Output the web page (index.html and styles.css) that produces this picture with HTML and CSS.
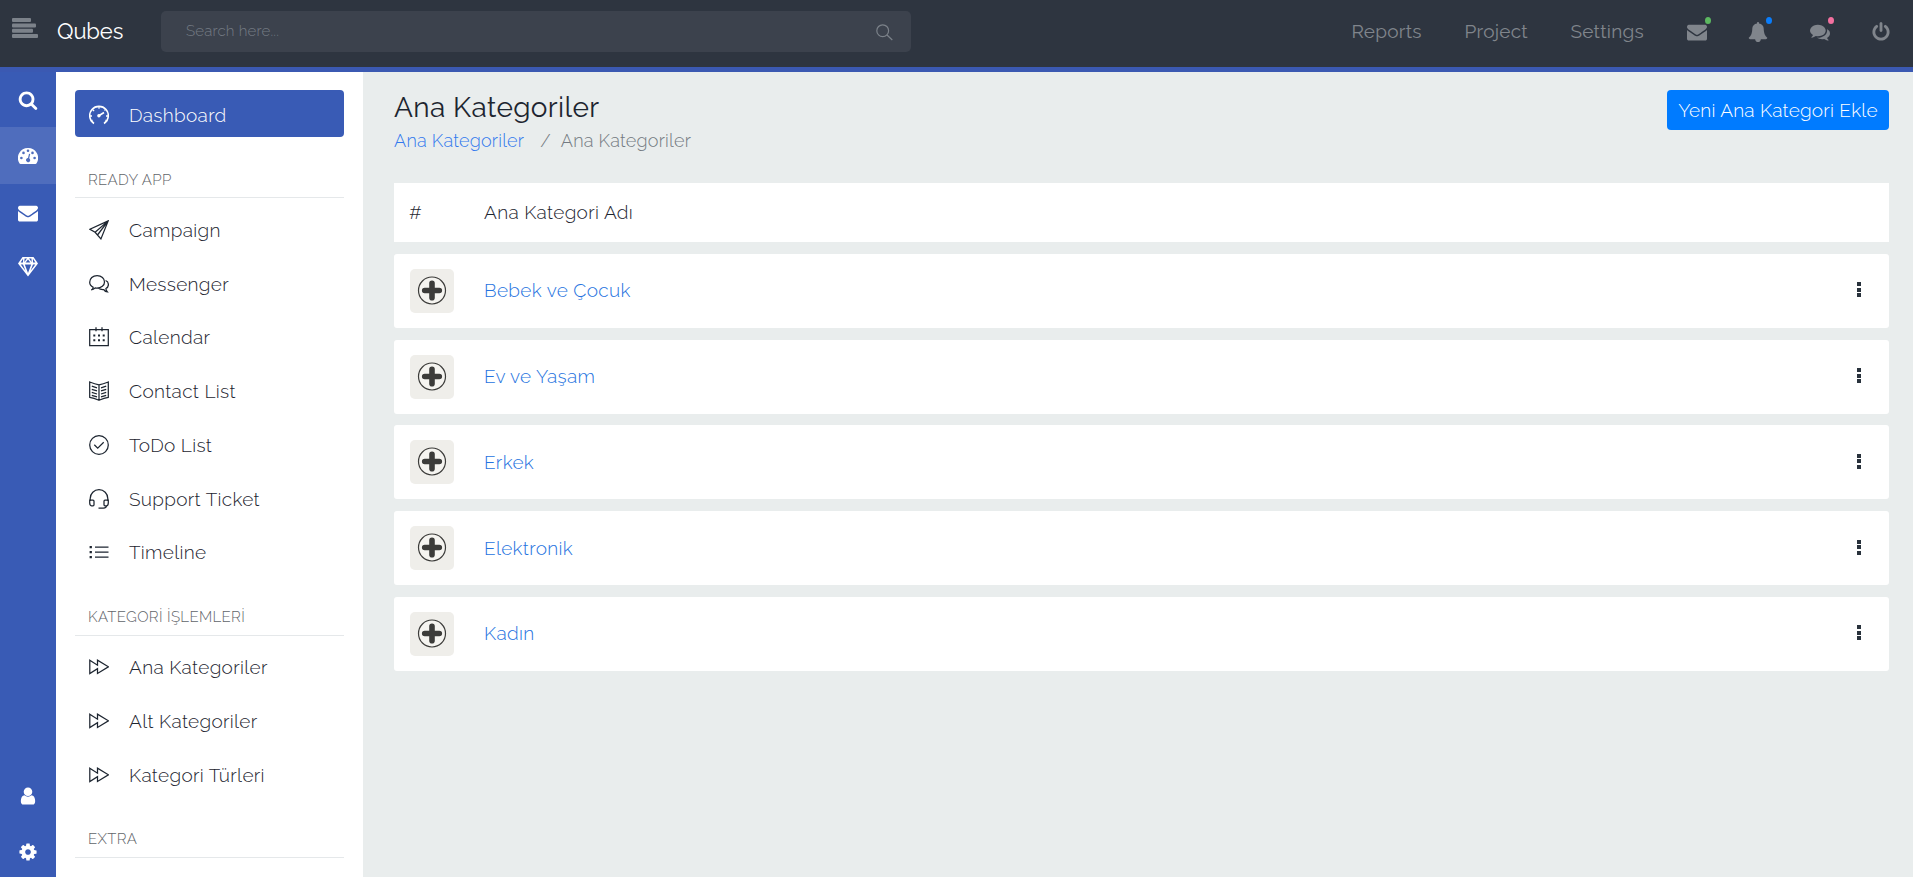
FILE: index.html
```html
<!DOCTYPE html>
<html lang="tr">
<head>
<meta charset="utf-8">
<title>Qubes - Ana Kategoriler</title>
<link rel="stylesheet" href="styles.css">
</head>
<body>
<svg class="sprite" aria-hidden="true">
  <symbol id="search" viewBox="0 0 1792 1792"><path d="M1216 832q0-185-131.5-316.5t-316.5-131.5-316.5 131.5-131.5 316.5 131.5 316.5 316.5 131.5 316.5-131.5 131.5-316.5zm512 832q0 52-38 90t-90 38q-54 0-90-38l-343-342q-179 124-399 124-143 0-273.5-55.5t-225-150-150-225-55.5-273.5 55.5-273.5 150-225 225-150 273.5-55.5 273.5 55.5 225 150 150 225 55.5 273.5q0 220-124 399l343 343q37 37 37 90z"/></symbol>
  <symbol id="mail" viewBox="0 0 1792 1792"><path d="M1792 710v794q0 66-47 113t-113 47h-1472q-66 0-113-47t-47-113v-794q44 49 101 87 362 246 497 345 57 42 92.5 65.5t94.5 48 110 24.5h2q51 0 110-24.5t94.5-48 92.5-65.5q170-123 498-345 57-39 100-87zm0-294q0 79-49 151t-122 123q-376 261-468 325-10 7-42.5 31t-54 38.5-52 32.5-57.5 27-50 9h-2q-23 0-50-9t-57.5-27-52-32.5-54-38.5-42.5-31q-91-64-262-182.5t-205-142.5q-62-42-117-115.5t-55-136.5q0-78 41.5-130t118.5-52h1472q65 0 112.5 47t47.5 113z"/></symbol>
  <symbol id="bell" viewBox="0 0 1792 1792"><path d="M1728 1408q0 52-38 90t-90 38h-448q0 106-75 181t-181 75-181-75-75-181h-448q-52 0-90-38t-38-90q50-42 91-88t85-119.5 74.500-158.500 50-206 19.500-260q0-152 117-282.500t307-158.500q-8-19-8-39 0-40 28-68t68-28 68 28 28 68q0 20-8 39 190 28 307 158.500t117 282.500q0 139 19.500 260t50 206 74.500 158.500 85 119.500 91 88z"/></symbol>
  <symbol id="comments" viewBox="0 0 1792 1792"><path d="M1408 768q0 139-94 257t-256.5 186.500-353.500 68.500q-86 0-176-16-124 88-278 128-36 9-86 16h-3q-11 0-20.500-8t-11.500-21q-1-3-1-6.500t.5-6.500 2-6l2.500-5 3.500-5.500 4-5 4.500-5 4-4.500q5-6 23-25t26-29.500 22.500-29 25-38.500 20.500-44q-124-72-195-177t-71-224q0-139 94-257t256.500-186.500 353.500-68.500 353.500 68.500 256.500 186.500 94 257zm384 256q0 120-71 224.500t-195 176.500q10 24 20.500 44t25 38.500 22.500 29 26 29.500 23 25q1 1 4 4.500t4.500 5 4 5 3.500 5.500l2.500 5 2 6 .5 6.500-1 6.500q-3 14-13 22t-22 7q-50-7-86-16-154-40-278-128-90 16-176 16-271 0-472-132 58 4 88 4 161 0 309-45t264-129q125-92 192-212t67-254q0-77-23-152 129 71 204 178t75 230z"/></symbol>
  <symbol id="power" viewBox="0 0 1792 1792"><path d="M1664 896q0 156-61 298t-164 245-245 164-298 61-298-61-245-164-164-245-61-298q0-182 80.500-343t226.500-270q43-32 95.500-25t83.500 50q32 42 24.500 94.500t-49.500 84.500q-98 74-151.500 181t-53.500 228q0 104 40.500 198.500t109.500 163.500 163.500 109.500 198.500 40.500 198.500-40.500 163.500-109.500 109.500-163.500 40.500-198.500q0-121-53.500-228t-151.500-181q-42-32-49.500-84.500t24.500-94.500q31-43 84-50t95 25q146 109 226.500 270t80.500 343zm-640-768v640q0 52-38 90t-90 38-90-38-38-90v-640q0-52 38-90t90-38 90 38 38 90z"/></symbol>
  <symbol id="user" viewBox="0 0 1792 1792"><path d="M1536 1399q0 109-62.500 187t-150.500 78h-854q-88 0-150.500-78t-62.500-187q0-85 8.500-160.500t31.500-152 58.500-131 94-89 134.500-34.500q131 128 313 128t313-128q76 0 134.500 34.500t94 89 58.500 131 31.500 152 8.500 160.500zm-256-887q0 159-112.500 271.500t-271.500 112.500-271.500-112.500-112.500-271.500 112.500-271.500 271.500-112.500 271.500 112.500 112.500 271.500z"/></symbol>
  <symbol id="cog" viewBox="0 0 1792 1792"><path d="M1152 896q0-106-75-181t-181-75-181 75-75 181 75 181 181 75 181-75 75-181zm512-109v222q0 12-8 23t-20 13l-185 28q-19 54-39 91 35 50 107 138 10 12 10 25t-9 23q-27 37-99 108t-94 71q-12 0-26-9l-138-108q-44 23-91 38-16 136-29 186-7 28-36 28h-222q-14 0-24.500-8.500t-11.500-21.500l-28-184q-49-16-90-37l-141 107q-10 9-25 9-14 0-25-11-126-114-165-168-7-10-7-23 0-12 8-23 15-21 51-66.500t54-70.500q-27-50-41-99l-183-27q-13-2-21-12.500t-8-23.500v-222q0-12 8-23t19-13l186-28q14-46 39-92-40-57-107-138-10-12-10-24 0-10 9-23 26-36 98.500-107.500t94.500-71.500q13 0 26 10l138 107q44-23 91-38 16-136 29-186 7-28 36-28h222q14 0 24.500 8.500t11.500 21.500l28 184q49 16 90 37l142-107q9-9 24-9 13 0 25 10 129 119 165 170 7 8 7 22 0 12-8 23-15 21-51 66.500t-54 70.500q26 50 41 98l183 28q13 2 21 12.500t8 23.500z"/></symbol>
  <symbol id="gauge" viewBox="0 0 20 20"><path fill-rule="evenodd" d="M10 2a10 10 0 0 1 8.600 15.200q-.4.800-1.200.8H2.600q-.8 0-1.200-.8A10 10 0 0 1 10 2zM2.100 12a1.300 1.300 0 1 0 2.600 0 1.300 1.300 0 1 0-2.600 0zM4.200 6.900a1.300 1.300 0 1 0 2.600 0 1.300 1.300 0 1 0-2.600 0zM8.700 4.700a1.300 1.300 0 1 0 2.600 0 1.300 1.300 0 1 0-2.600 0zM13.200 6.900a1.300 1.300 0 1 0 2.600 0 1.300 1.300 0 1 0-2.600 0zM15.300 12a1.300 1.300 0 1 0 2.600 0 1.300 1.300 0 1 0-2.600 0zM11 7.800L10 12a2.100 2.100 0 1 0 1.200.3L12.200 8z"/></symbol>
  <symbol id="diamond" viewBox="0 0 20 20"><path fill-rule="evenodd" d="M4.500 0h11L20 6.500 10 19.500 0 6.500zM5.100 1.700L2.600 5.500H5zM6.600 1.500L6.300 5 9 1.500zM11 1.500L13.700 5l-.3-3.500zM14.900 1.700l.1 3.800h2.400zM10 2.600L7.600 5.500h4.800zM2.700 7.400l4.800 6.300-2.500-6.300zM6.800 7.400L10 16l3.200-8.600zM15 7.400l-2.500 6.300 4.800-6.300z"/></symbol>
  <symbol id="speed" viewBox="0 0 20 20"><g class="line"><path d="M5 18.500A9.300 9.300 0 1 1 15 18.500" stroke-width="1.600"/><path d="M.7 11h2.300M17 11h2.300M3.500 4.500l1.600 1.600M10 1.500v2.300M1.500 16l2-.8M18.500 16l-2-.8M16.500 4.500l-1 1" stroke-width="1.300"/><path d="M9.800 10.800l5.200-3.300" stroke-width="1.600"/></g><circle cx="9.900" cy="10.800" r="1.700"/></symbol>
  <symbol id="plane" viewBox="0 0 20 20"><g class="line"><path d="M19.200.9L.9 9.200l5.200 3.100 5.800 6.600zM19.200.9L6.100 12.300M19.200.9L8.500 15"/></g></symbol>
  <symbol id="bubbles" viewBox="0 0 20 20"><g class="line"><path d="M2.200 16q2-.8 2-2.800C1.800 12.100.7 10.300.7 8.200.7 4.800 3.700 1.500 8.100 1.500s7.400 3 7.400 6.400-3.200 6.200-7.600 6.200q-1 0-1.700-.2Q4.500 15.800 2.200 16zM16.600 6.500c2 .8 2.800 2.300 2.800 4.100 0 1.700-.8 3.100-2.500 3.900q0 1.900 1.500 3.400-2.300 0-3.600-2.300-3.600.3-5.500-1.600"/></g></symbol>
  <symbol id="calendar" viewBox="0 0 20 20"><g class="line"><path d="M.7 2.700h18.600v16H.7zM7 .3v4M13 .3v4"/></g><path d="M4.300 7.500h2v2h-2zM9 7.500h2v2H9zM13.700 7.500h2v2h-2zM4.300 12.300h2v2h-2zM9 12.300h2v2H9zM13.700 12.300h2v2h-2z"/></symbol>
  <symbol id="book" viewBox="0 0 20 20"><g class="line"><path d="M10 3.800Q6 2.900.7 1v15.300q4 .7 9.300 3 5.300-2.300 9.300-3V1Q14 2.900 10 3.800zM10 3.800v15.500M2.800 5.200l5.200 1.600M2.800 8.300L8 9.900M2.800 11.400L8 13M2.800 14.300L8 15.900M17.200 5.200L12 6.800M17.200 8.300L12 9.900M17.200 11.400L12 13M17.200 14.300L12 15.900"/></g></symbol>
  <symbol id="check" viewBox="0 0 20 20"><g class="line"><circle cx="10" cy="10" r="9.300"/><path d="M5.300 9.800l3.400 3.400 6-6"/></g></symbol>
  <symbol id="headset" viewBox="0 0 20 20"><g class="line"><path d="M1.200 12V9.500a8.800 8.800 0 0 1 17.600 0V12M.7 11.200H4q1 0 1 1v3.600q0 1-1 1H2.500q-1.800 0-1.800-3zM19.300 11.200H16q-1 0-1 1v3.600q0 1 1 1h1.500q1.800 0 1.800-3zM17.500 16.800q0 2.200-3 2.200h-5"/></g></symbol>
  <symbol id="list" viewBox="0 0 20 20"><g class="line"><path d="M6 5.200h13.500M6 10.100h13.500M6 15h13.500"/></g><path d="M.6 4h2.300v2.300H.6zM.6 9h2.300v2.300H.6zM.6 14h2.300v2.300H.6z"/></symbol>
  <symbol id="forward" viewBox="0 0 20 20"><g class="line"><path d="M.8 3.200l7.700 5V3.200L19.400 9.800 8.500 16.500v-4.900L.8 16.500z"/></g></symbol>
  <symbol id="plus" viewBox="0 0 44 44"><circle cx="22" cy="21.500" r="13.500" fill="#f5f4f0" stroke="#3c3c3a" stroke-width="1.200"/><path d="M22 14.200v14.600M14.700 21.500h14.600" stroke="#3c3c3a" stroke-width="5.600" stroke-linecap="round"/></symbol>
</svg>

<header class="topbar">
  <svg class="menu-toggle" viewBox="0 0 26 20"><rect width="19" height="4" rx="1"/><rect y="5.500" width="24" height="4" rx="1"/><rect y="10.700" width="21" height="4" rx="1"/><rect y="16" width="26" height="4" rx="1"/></svg>
  <div class="brand">Qubes</div>
  <div class="searchbox"><span class="search-hint">Search here...</span>
    <svg class="search-glass" viewBox="0 0 17 17"><circle cx="6.700" cy="6.700" r="5.900"/><path d="M11 11l5.300 5"/></svg></div>
  <nav class="topnav">
    <a class="top-reports">Reports</a><a class="top-project">Project</a><a class="top-settings">Settings</a>
    <span class="tool"><svg><use href="#mail"/></svg><i class="dot green"></i></span>
    <span class="tool"><svg><use href="#bell"/></svg><i class="dot blue"></i></span>
    <span class="tool"><svg><use href="#comments"/></svg><i class="dot pink"></i></span>
    <span class="tool"><svg><use href="#power"/></svg></span>
  </nav>
</header>

<div class="shell">
  <aside class="rail">
    <a class="rail-link"><svg><use href="#search"/></svg></a>
    <a class="rail-link active"><svg><use href="#gauge"/></svg></a>
    <a class="rail-link"><svg><use href="#mail"/></svg></a>
    <a class="rail-link short"><svg><use href="#diamond"/></svg></a>
    <a class="rail-link bottom"><svg><use href="#user"/></svg></a>
    <a class="rail-link last"><svg><use href="#cog"/></svg></a>
  </aside>

  <nav class="sidebar">
    <a class="item current"><svg><use href="#speed"/></svg>Dashboard</a>
    <h6 class="group">READY APP</h6>
    <a class="item"><svg><use href="#plane"/></svg>Campaign</a>
    <a class="item"><svg><use href="#bubbles"/></svg>Messenger</a>
    <a class="item"><svg><use href="#calendar"/></svg>Calendar</a>
    <a class="item"><svg><use href="#book"/></svg>Contact List</a>
    <a class="item"><svg><use href="#check"/></svg>ToDo List</a>
    <a class="item"><svg><use href="#headset"/></svg>Support Ticket</a>
    <a class="item"><svg><use href="#list"/></svg>Timeline</a>
    <h6 class="group tight">KATEGORİ İŞLEMLERİ</h6>
    <a class="item"><svg><use href="#forward"/></svg>Ana Kategoriler</a>
    <a class="item"><svg><use href="#forward"/></svg>Alt Kategoriler</a>
    <a class="item"><svg><use href="#forward"/></svg>Kategori Türleri</a>
    <h6 class="group tight">EXTRA</h6>
  </nav>

  <main class="content">
    <div class="page-head">
      <div>
        <h1 class="title">Ana Kategoriler</h1>
        <div class="crumbs"><a class="crumb-link">Ana Kategoriler</a><span class="slash">/</span><span>Ana Kategoriler</span></div>
      </div>
      <button class="add">Yeni Ana Kategori Ekle</button>
    </div>
    <div class="table">
      <div class="row head"><span class="hash">#</span><span>Ana Kategori Adı</span></div>
      <div class="row"><svg class="thumb"><use href="#plus"/></svg><a class="name">Bebek ve Çocuk</a><span class="more"><i></i><i></i><i></i></span></div>
      <div class="row"><svg class="thumb"><use href="#plus"/></svg><a class="name">Ev ve Yaşam</a><span class="more"><i></i><i></i><i></i></span></div>
      <div class="row"><svg class="thumb"><use href="#plus"/></svg><a class="name">Erkek</a><span class="more"><i></i><i></i><i></i></span></div>
      <div class="row"><svg class="thumb"><use href="#plus"/></svg><a class="name">Elektronik</a><span class="more"><i></i><i></i><i></i></span></div>
      <div class="row"><svg class="thumb"><use href="#plus"/></svg><a class="name">Kadın</a><span class="more"><i></i><i></i><i></i></span></div>
    </div>
  </main>
</div>
</body>
</html>
```
FILE: styles.css
```css
* { box-sizing: border-box; }
body {
  margin: 0;
  height: 877px;
  overflow: hidden;
  display: flex;
  flex-direction: column;
  background: #e9eded;
  color: #1d2530;
  font-family: Raleway, Lato, "Open Sans", sans-serif;
  font-size: 19px;
  font-weight: 360;
  letter-spacing: 0.33px;
}
.sprite { position: absolute; width: 0; height: 0; }
.line { fill: none; stroke: currentColor; stroke-width: 1.25; }
svg { fill: currentColor; flex: none; }

/* top bar */
.topbar {
  flex: none;
  height: 72px;
  padding: 0 22px 0 12px;
  display: flex;
  align-items: flex-start;
  background: #2e3540;
  border-bottom: 5px solid #3b59b2;
}
.menu-toggle { width: 26px; height: 20px; margin-top: 18px; color: #7c828a; }
.brand { width: 104px; margin: 16px 0 0 19px; font-size: 22px; font-weight: 400; letter-spacing: -0.1px; line-height: 30px; color: #fff; }
.searchbox {
  width: 750px;
  height: 41px;
  margin-top: 11px;
  padding: 0 18px 0 25px;
  display: flex;
  align-items: center;
  justify-content: space-between;
  border-radius: 5px;
  background: #3c424d;
}
.search-hint { font-size: 15px; font-weight: 300; line-height: 20px; letter-spacing: 0.2px; padding-bottom: 2px; color: #747b84; }
.search-glass { width: 17px; height: 17px; margin-top: 2px; fill: none; stroke: #7c828a; stroke-width: 1.2; }
.topnav { margin-left: auto; display: flex; height: 63px; align-items: center; font-weight: 400; letter-spacing: 0.25px; color: #80858c; }
.topnav a { padding-bottom: 2px; }
.top-reports { width: 113px; }
.top-project { width: 106px; }
.top-settings { width: 116px; }
.tool { position: relative; width: 20px; height: 20px; margin-right: 41.500px; }
.tool:last-child { margin-right: 0; }
.tool svg { width: 20px; height: 20px; display: block; }
.dot { position: absolute; left: 18px; top: -5px; width: 6px; height: 7px; border-radius: 50%; }
.green { background: #5cb860; }
.blue { background: #0a7dfb; }
.pink { background: #f3709f; }

/* icon rail */
.shell { flex: 1; min-height: 0; display: flex; }
.rail { width: 56px; display: flex; flex-direction: column; background: #395bb5; color: #fff; }
.rail-link { flex: none; height: 57px; display: flex; align-items: center; justify-content: center; }
.rail-link:first-child { height: 55px; }
.rail-link.short { height: 52px; }
.rail-link.active { background: #4f6dbd; }
.rail-link.bottom { margin-top: auto; height: 62px; }
.rail-link.last { height: 50px; }
.rail-link svg { width: 20px; height: 20px; }

/* sidebar */
.sidebar { width: 307px; padding: 18px 19px 0; background: #fff; overflow: hidden; }
.item { height: 47px; margin-bottom: 6.750px; padding-left: 14px; display: flex; align-items: center; gap: 20px; border-radius: 4px; }
.item svg { width: 20px; height: 20px; }
.item.current { padding-top: 2px; background: #395bb5; color: #fff; }
.group {
  height: 54px;
  margin: 0 0 8.500px;
  padding: 24px 13px 0;
  border-bottom: 1px solid #e5e8ea;
  font-size: 15px;
  font-weight: 300;
  line-height: 24px;
  letter-spacing: 0.35px;
  color: #5f6469;
}
.group.tight { height: 53.250px; margin-bottom: 7.750px; padding-top: 22.500px; }

/* content */
.content { flex: 1; padding: 18px 24px 0 31px; }
.page-head { height: 93px; display: flex; align-items: flex-start; justify-content: space-between; }
.title { margin: 1px 0 0; font-size: 28px; font-weight: 400; line-height: 34px; letter-spacing: 0.35px; }
.crumbs { display: flex; font-size: 18px; line-height: 32px; letter-spacing: 0.23px; color: #737a81; }
.crumb-link { color: #3279ee; }
.slash { margin: 0 10px 0 16px; }
.add { width: 222px; height: 40px; padding: 0; border: 0; border-radius: 4px; background: #007bff; color: #fff; font: inherit; letter-spacing: 0.23px; }
.table { display: grid; gap: 11.750px; }
.row { height: 74px; padding: 0 28px 0 16px; display: flex; align-items: center; border-radius: 3px; background: #fff; }
.row.head { height: 59px; padding-bottom: 2px; border-radius: 0; }
.hash { width: 74px; margin-left: -1px; margin-right: 1px; }
.thumb { width: 44px; height: 44px; margin-right: 30px; border-radius: 5px; background: #efeeea; }
.name { padding-bottom: 1px; color: #2673e0; }
.more { margin: 0 0 2px auto; display: grid; gap: 1.500px; }
.more i { width: 4.500px; height: 4px; background: #29323c; }
```
